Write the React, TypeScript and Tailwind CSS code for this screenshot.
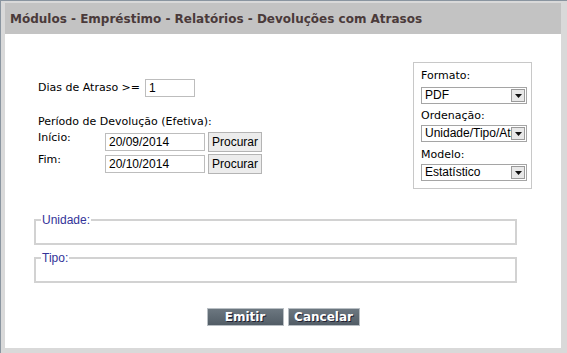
import React from "react";

const verdana = { fontFamily: '"DejaVu Sans", Verdana, sans-serif' };
const arial = { fontFamily: '"Liberation Sans", Arial, sans-serif' };

function Select({ value }: { value: string }) {
  return (
    <div className="flex h-[17px] w-[106px] items-center border border-[#a5a5a5] bg-white" style={arial}>
      <div className="flex-1 overflow-hidden whitespace-nowrap pl-[3px] text-[12px] leading-[15px] text-black">{value}</div>
      <div className="mr-[1px] flex h-[13px] w-[14px] items-center justify-center border border-[#9a9a9a] bg-[#e8e8e8]">
        <svg width="7" height="4" viewBox="0 0 7 4"><path d="M0 0H7L3.5 4Z" fill="#111" /></svg>
      </div>
    </div>
  );
}

function Btn({ children }: { children: React.ReactNode }) {
  return (
    <div className="flex h-[20px] w-[54px] items-center justify-center border border-[#b4b4b4] bg-[#ececec] text-[12px] text-black" style={arial}>
      {children}
    </div>
  );
}

function Field({ w, value }: { w: number; value: string }) {
  return (
    <div
      className="flex h-[18px] items-center border border-[#bdbdbd] bg-white pl-[3px] text-[12px] text-black"
      style={{ ...arial, width: w }}
    >
      {value}
    </div>
  );
}

function Group({ label }: { label: string }) {
  return (
    <fieldset className="ml-[29px] mr-[44px] h-[31px] border-2 border-[#d2d2d2] px-[5px]" style={arial}>
      <legend className="px-[1px] text-[12px] leading-[12px] text-[#333399]">{label}</legend>
    </fieldset>
  );
}

export default function App() {
  return (
    <div className="h-[353px] w-[567px] overflow-hidden border-l border-t border-[#8a95a0] bg-[#d9d9d9] pb-[5px] pl-[4px] pr-[6px] pt-[2px]">
      <div className="flex h-full flex-col">
        <div className="flex h-[31px] items-center bg-[#c3c3c3] pl-[5px] text-[12px] font-bold text-[#4a3a3a]" style={verdana}>
          Módulos - Empréstimo - Relatórios - Devoluções com Atrasos
        </div>
        <div className="flex flex-1 flex-col bg-white">
          <div className="flex items-start pt-[28px]">
            <div className="ml-[33px] mt-[17px] flex flex-col text-[11px] text-black" style={verdana}>
              <div className="flex h-[18px] items-center">
                <span className="w-[107px]">Dias de Atraso &gt;=</span>
                <Field w={50} value="1" />
              </div>
              <div className="mt-[18px] leading-[14px]">Período de Devolução (Efetiva):</div>
              <div className="mt-[3px] flex h-[20px] items-start">
                <span className="-mt-[1px] w-[67px] leading-[14px]">Início:</span>
                <div className="mt-[1px]"><Field w={100} value="20/09/2014" /></div>
                <div className="ml-[3px]"><Btn>Procurar</Btn></div>
              </div>
              <div className="mt-[2px] flex h-[20px] items-start">
                <span className="-mt-[1px] w-[67px] leading-[14px]">Fim:</span>
                <div className="mt-[1px]"><Field w={100} value="20/10/2014" /></div>
                <div className="ml-[3px]"><Btn>Procurar</Btn></div>
              </div>
            </div>
            <div className="ml-auto mr-[29px] flex h-[127px] w-[119px] flex-col border border-[#c8c8c8] pl-[7px] pt-[6px] text-[11px] leading-[14px] text-black" style={verdana}>
              <div>Formato:</div>
              <div className="mt-[4px]"><Select value="PDF" /></div>
              <div className="mt-[5px]">Ordenação:</div>
              <div className="mt-[2px]"><Select value="Unidade/Tipo/Atraso" /></div>
              <div className="mt-[6px]">Modelo:</div>
              <div className="mt-[2px]"><Select value="Estatístico" /></div>
            </div>
          </div>
          <div className="mt-[25px] flex flex-col gap-[7px]">
            <Group label="Unidade:" />
            <Group label="Tipo:" />
          </div>
          <div className="mt-[25px] flex justify-center gap-[4px]">
            <div className="flex h-[18px] w-[77px] items-center justify-center border border-[#b9bfc4] bg-gradient-to-b from-[#6c7780] to-[#525d66] text-[12px] font-bold text-white [text-shadow:1px_1px_0_#223]" style={verdana}>
              Emitir
            </div>
            <div className="flex h-[18px] w-[72px] items-center justify-center border border-[#b9bfc4] bg-gradient-to-b from-[#6c7780] to-[#525d66] text-[12px] font-bold text-white [text-shadow:1px_1px_0_#223]" style={verdana}>
              Cancelar
            </div>
          </div>
        </div>
      </div>
    </div>
  );
}
